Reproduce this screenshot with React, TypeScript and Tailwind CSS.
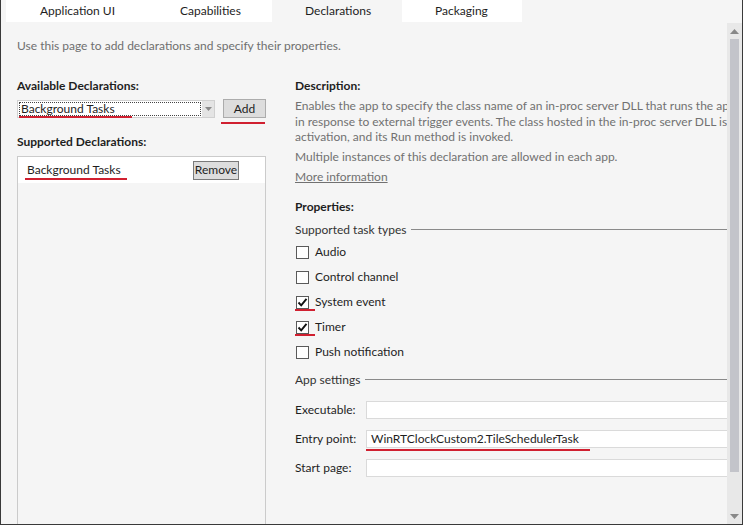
import React from "react";

const FONT = { fontFamily: "Lato, 'Liberation Sans', sans-serif" };

function Tab({ label, w, pl, active }: { label: string; w: string; pl: string; active?: boolean }) {
  return (
    <div className={`${w} ${pl} h-full flex items-center ${active ? "bg-[#f5f5f5]" : "bg-white"} text-[#1e1e1e]`}>
      {label}
    </div>
  );
}

function RedLine({ className }: { className: string }) {
  return <div className={`absolute h-[2px] bg-[#d02030] ${className}`} />;
}

function Check({ checked }: { checked?: boolean }) {
  return (
    <div className="w-[13px] h-[13px] border border-[#5a5a5a] bg-white flex items-center justify-center shrink-0">
      {checked && (
        <svg width="11" height="11" viewBox="0 0 11 11">
          <path d="M1.5 5.5 L4.2 8.3 L9.5 1.8" fill="none" stroke="#111" strokeWidth="1.9" />
        </svg>
      )}
    </div>
  );
}

function CheckRow({ label, checked, underline }: { label: string; checked?: boolean; underline?: boolean }) {
  return (
    <div className="h-[25px] flex items-center relative">
      <div className="ml-[1px]">
        <Check checked={checked} />
      </div>
      <span className="ml-[6px] text-[#1e1e1e]">{label}</span>
      {underline && <RedLine className="left-[-4px] top-[19px] w-[24px]" />}
    </div>
  );
}

function GroupHead({ label }: { label: string }) {
  return (
    <div className="h-[16px] flex items-center text-[#333]">
      <span className="whitespace-nowrap">{label}</span>
      <div className="flex-1 h-px bg-[#8a8a8a] ml-[5px]" />
    </div>
  );
}

function Field({ label, value, underline }: { label: string; value?: string; underline?: boolean }) {
  return (
    <div className="h-[18px] flex items-center relative">
      <span className="w-[71px] shrink-0 text-[#1e1e1e]">{label}</span>
      <div className="flex-1 h-[18px] -mr-[6px] bg-white border border-[#dadada] flex items-center pl-[4px] text-[#1e1e1e] whitespace-nowrap">
        {value}
      </div>
      {underline && <RedLine className="left-[71px] top-[19px] w-[224px]" />}
    </div>
  );
}

export default function App() {
  return (
    <div
      className="w-[743px] h-[525px] border-x border-b border-[#3a3a3a] bg-[#f5f5f5] flex flex-col text-[12px] leading-[16px]"
      style={FONT}
    >
      <div className="h-[22px] flex pl-[5px] shrink-0">
        <Tab label="Application UI" w="w-[154px]" pl="pl-[34px]" />
        <Tab label="Capabilities" w="w-[112px]" pl="pl-[20px]" />
        <Tab label="Declarations" w="w-[130px]" pl="pl-[33px]" active />
        <Tab label="Packaging" w="w-[120px]" pl="pl-[33px]" />
      </div>
      <div className="flex flex-1 min-h-0">
        <div className="flex-1 min-w-0 overflow-hidden flex flex-col pl-[16px]">
          <div className="mt-[16px] text-[#6f6f6f] whitespace-nowrap">
            Use this page to add declarations and specify their properties.
          </div>
          <div className="flex flex-1 min-h-0 mt-[24px]">
            {/* Left column */}
            <div className="w-[249px] shrink-0 flex flex-col">
              <div className="font-bold text-[#1e1e1e]">Available Declarations:</div>
              <div className="mt-[5px] h-[19px] flex relative">
                <div className="w-[198px] h-[18px] mt-[1px] flex bg-white border border-[#d0d0d0]">
                  <div className="flex-1 m-[1px] border border-dotted border-[#444] flex items-center pl-[1px] text-[#1e1e1e]">
                    Background Tasks
                  </div>
                  <div className="w-[12px] bg-[#e4e4e4] flex items-center justify-center">
                    <svg width="7" height="4" viewBox="0 0 7 4">
                      <path d="M0 0 L7 0 L3.5 4 Z" fill="#8a8a8a" />
                    </svg>
                  </div>
                </div>
                <div className="ml-[8px] w-[43px] h-[19px] bg-[#dddddd] border border-[#acacac] flex items-center justify-center text-[#1e1e1e]">
                  Add
                </div>
                <RedLine className="left-[2px] top-[17px] w-[113px]" />
                <RedLine className="left-[204px] top-[23px] w-[44px]" />
              </div>
              <div className="mt-[16px] font-bold text-[#1e1e1e]">Supported Declarations:</div>
              <div className="mt-[6px] flex-1 border-x border-t border-[#cbcbcb] flex flex-col">
                <div className="h-[26px] bg-white flex items-center relative">
                  <span className="ml-[9px] text-[#1e1e1e]">Background Tasks</span>
                  <div className="ml-auto mr-[26px] w-[46px] h-[19px] bg-[#dddddd] border border-[#7a7a7a] flex items-center justify-center text-[#1e1e1e]">
                    Remove
                  </div>
                  <RedLine className="left-[7px] top-[21px] w-[102px]" />
                </div>
              </div>
            </div>
            {/* Right column */}
            <div className="flex-1 min-w-0 ml-[29px] flex flex-col overflow-hidden">
              <div className="font-bold text-[#1e1e1e]">Description:</div>
              <div className="mt-[4px] text-[#717171] leading-[15.5px] whitespace-nowrap">
                <div>Enables the app to specify the class name of an in-proc server DLL that runs the ap</div>
                <div>in response to external trigger events. The class hosted in the in-proc server DLL is</div>
                <div>activation, and its Run method is invoked.</div>
              </div>
              <div className="mt-[4px] text-[#717171] whitespace-nowrap">
                Multiple instances of this declaration are allowed in each app.
              </div>
              <div className="mt-[4px] text-[#717171] underline">More information</div>
              <div className="mt-[14px] font-bold text-[#1e1e1e]">Properties:</div>
              <div className="mt-[7px]">
                <GroupHead label="Supported task types" />
              </div>
              <div className="mt-[2px] flex flex-col">
                <CheckRow label="Audio" />
                <CheckRow label="Control channel" />
                <CheckRow label="System event" checked underline />
                <CheckRow label="Timer" checked underline />
                <CheckRow label="Push notification" />
              </div>
              <div className="mt-[7px]">
                <GroupHead label="App settings" />
              </div>
              <div className="mt-[13px] flex flex-col gap-[11px]">
                <Field label="Executable:" />
                <Field label="Entry point:" value="WinRTClockCustom2.TileSchedulerTask" underline />
                <Field label="Start page:" />
              </div>
            </div>
          </div>
        </div>
        {/* Scrollbar */}
        <div className="w-[15px] shrink-0 bg-[#e8e8e8] flex flex-col items-center mt-[1px]">
          <div className="h-[16px] flex items-center justify-center">
            <svg width="9" height="5" viewBox="0 0 9 5">
              <path d="M0 5 L9 5 L4.5 0 Z" fill="#888" />
            </svg>
          </div>
          <div className="w-[9px] h-[433px] bg-[#c3c4ca]" />
          <div className="flex-1" />
          <div className="h-[16px] flex items-center justify-center">
            <svg width="9" height="5" viewBox="0 0 9 5">
              <path d="M0 0 L9 0 L4.5 5 Z" fill="#888" />
            </svg>
          </div>
        </div>
      </div>
    </div>
  );
}
